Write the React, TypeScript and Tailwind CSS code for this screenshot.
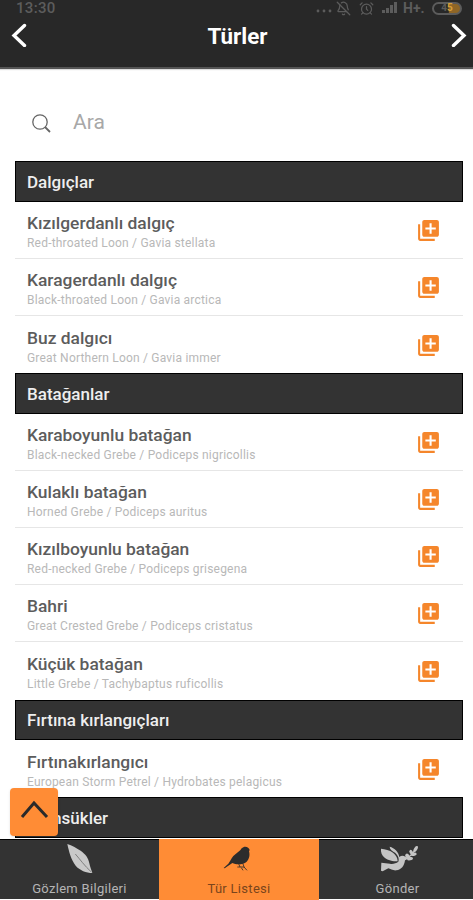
import { BellOff, AlarmClock } from 'lucide-react';
import { MdLibraryAdd } from 'react-icons/md';

type Species = { name: string; latin: string };
type Group = { title: string; species: Species[] };

const groups: Group[] = [
  {
    title: 'Dalgıçlar',
    species: [
      { name: 'Kızılgerdanlı dalgıç', latin: 'Red-throated Loon / Gavia stellata' },
      { name: 'Karagerdanlı dalgıç', latin: 'Black-throated Loon / Gavia arctica' },
      { name: 'Buz dalgıcı', latin: 'Great Northern Loon / Gavia immer' },
    ],
  },
  {
    title: 'Batağanlar',
    species: [
      { name: 'Karaboyunlu batağan', latin: 'Black-necked Grebe / Podiceps nigricollis' },
      { name: 'Kulaklı batağan', latin: 'Horned Grebe / Podiceps auritus' },
      { name: 'Kızılboyunlu batağan', latin: 'Red-necked Grebe / Podiceps grisegena' },
      { name: 'Bahri', latin: 'Great Crested Grebe / Podiceps cristatus' },
      { name: 'Küçük batağan', latin: 'Little Grebe / Tachybaptus ruficollis' },
    ],
  },
  {
    title: 'Fırtına kırlangıçları',
    species: [{ name: 'Fırtınakırlangıcı', latin: 'European Storm Petrel / Hydrobates pelagicus' }],
  },
  { title: 'Sümsükler', species: [] },
];

function StatusBar() {
  return (
    <div className="flex h-4 items-center justify-between pr-[11px] pl-4 text-[#5c5c5c]">
      <span className="text-[15px] leading-4 font-medium tracking-[0.3px]">13:30</span>
      <div className="flex h-4 items-center">
        <svg className="mr-1 h-4 w-4" viewBox="0 0 16 16" fill="currentColor">
          <circle cx="2" cy="11" r="1.4" />
          <circle cx="8" cy="11" r="1.4" />
          <circle cx="14" cy="11" r="1.4" />
        </svg>
        <BellOff className="mr-2 h-[15px] w-[15px]" />
        <AlarmClock className="mr-2 h-[15px] w-[15px]" />
        <svg className="mr-[5px] h-4 w-4" viewBox="0 0 16 16" fill="currentColor">
          <path d="M0 10h3v3H0zM4 8h3v5H4zM8 5h3v8H8zM12 2h3v11h-3z" />
        </svg>
        <span className="mr-[5px] w-[24px] text-[14px] leading-4 font-bold">H+.</span>
        <div className="flex h-[13px] w-[30px] items-center justify-center rounded-full border-2 border-[#5c5c5c] bg-linear-to-r from-transparent from-55% to-[#8f6626] to-60% text-[10px] leading-none font-bold">
          4<span className="text-[#d9a03c]">5</span>
        </div>
      </div>
    </div>
  );
}

function Header() {
  return (
    <header className="h-[69px] border-b-2 border-[#555] bg-[#282828] shadow-[0_1px_1px_#ddd]">
      <StatusBar />
      <div className="flex h-10 items-center justify-between pr-[6px] pl-[11px] text-white">
        <svg className="-mt-[3px] h-6 w-4" viewBox="0 0 16 24" fill="none" stroke="currentColor" strokeWidth="3.4" strokeLinecap="round">
          <path d="M13.5 2.5 3 12.5l10.5 10" />
        </svg>
        <h1 className="mr-[3px] text-[22.4px] leading-none font-bold">Türler</h1>
        <svg className="-mt-[3px] h-6 w-4" viewBox="0 0 16 24" fill="none" stroke="currentColor" strokeWidth="3.4" strokeLinecap="round">
          <path d="M2.5 2.5 13 12.5l-10.5 10" />
        </svg>
      </div>
    </header>
  );
}

function SearchBox() {
  return (
    <div className="flex h-[92.3px] items-center pt-[15px] pl-8">
      <svg className="mt-[3px] h-5 w-5" viewBox="0 0 20 20" fill="none" stroke="#666" strokeWidth="1.3">
        <circle cx="8" cy="8" r="7.2" />
        <path d="m13 13 5 5" strokeWidth="1.8" />
      </svg>
      <span className="ml-[21px] text-[21px] text-[#a8a8a8]">Ara</span>
    </div>
  );
}

function SpeciesRow({ name, latin }: Species) {
  return (
    <li className="flex h-[57.2px] items-center justify-between border-b border-[#e6e6e6] pr-[22px] pl-3 last:border-b-0">
      <div className="pt-1">
        <p className="text-[17.4px] leading-[22px] font-medium text-[#5c5c5c]">{name}</p>
        <p className="pt-px text-[12px] leading-[17px] tracking-[0.2px] text-[#b8b8b8]">{latin}</p>
      </div>
      <MdLibraryAdd className="mt-px h-[25px] w-[25px] text-[#f5862b]" />
    </li>
  );
}

function FeatherIcon() {
  return (
    <svg className="h-[34px] w-10" viewBox="0 0 120 102">
      <path d="M22 12c14 4 26 12 40 20 14 10 24 22 26 38 2 10 6 20 9 29-18 0-38-8-50-22-14-18-20-42-25-65z" fill="#c9c9c9" />
      <path d="M46 42c14 16 28 36 48 54" stroke="#808080" strokeWidth="3" fill="none" />
    </svg>
  );
}

function BirdIcon() {
  return (
    <svg className="h-[34px] w-[50px]" viewBox="0 0 150 102" fill="#2c2c2c">
      <path d="M107 30c-2-10-16-14-24-5-4 8-16 15-25 23-7 8-9 16-15 23L29 84l3 1 23-16c13 6 32 5 43-4 9-9 10-21 7-31z" />
      <path d="m73 69 5 12m8-12 5 14M70 81h20l9 10M82 83l5 8" stroke="#2c2c2c" strokeWidth="2.5" fill="none" />
    </svg>
  );
}

function DoveIcon() {
  return (
    <svg className="h-[34px] w-[54px]" viewBox="0 0 162 102" fill="#c4c4c4">
      <path d="M30 26c12 2 26 4 36 12 8 7 14 15 14 26-14 0-30-3-38-10-10-9-13-17-12-28z" />
      <path d="M56 20c15 4 27 16 29 31 5-4 12-5 18-1l8 5-9 6c-2 16-11 29-26 30-10 1-18-4-24-6l-17 9-5-2 1-24 26 3c8 2 18-1 25-6 4-9-2-23-14-29-5-4-12-8-12-16z" />
      <path d="M100 60c17-8 28-20 36-38" stroke="#c4c4c4" strokeWidth="4" fill="none" />
      <g>
        <ellipse cx="110" cy="49" rx="9" ry="6" transform="rotate(55 110 49)" />
        <ellipse cx="121" cy="37" rx="8" ry="5" transform="rotate(55 121 37)" />
        <ellipse cx="117" cy="56" rx="9" ry="5" transform="rotate(-10 117 56)" />
        <ellipse cx="128" cy="43" rx="9" ry="5" transform="rotate(-10 128 43)" />
        <ellipse cx="134" cy="27" rx="10" ry="5" transform="rotate(-60 134 27)" />
      </g>
    </svg>
  );
}

const tabs = [
  { label: 'Gözlem Bilgileri', icon: FeatherIcon, active: false },
  { label: 'Tür Listesi', icon: BirdIcon, active: true },
  { label: 'Gönder', icon: DoveIcon, active: false },
];

export default function App() {
  return (
    <div className="relative flex h-[900px] w-[473px] flex-col overflow-hidden bg-white font-[Roboto,sans-serif]">
      <Header />
      <SearchBox />
      <main className="min-h-0 flex-1 overflow-hidden pr-[10px] pl-[15px]">
        {groups.map((group) => (
          <section key={group.title}>
            <h2 className="flex h-[40.4px] items-center border border-black bg-[#333] pt-[2px] pl-[11px] text-[17px] font-medium text-[#eee]">
              {group.title}
            </h2>
            <ul>
              {group.species.map((s) => (
                <SpeciesRow key={s.name} {...s} />
              ))}
            </ul>
          </section>
        ))}
      </main>
      <button className="absolute top-[788px] left-[10px] flex h-12 w-12 items-center justify-center rounded bg-[#ff8c35] shadow">
        <svg className="h-8 w-8" viewBox="0 0 32 32" fill="none" stroke="#2a2a2a" strokeWidth="3">
          <path d="m4 21 12-14 13 14" />
        </svg>
      </button>
      <nav className="mb-px grid h-[60px] shrink-0 grid-cols-[159px_160px_154px] bg-[#333]">
        {tabs.map(({ label, icon: Icon, active }) => (
          <div
            key={label}
            className={
              active
                ? 'flex flex-col items-center border-b border-black bg-[#ff8c35] pt-px text-[#7a451c]'
                : 'flex flex-col items-center border-y border-black text-[#b5b5b5] last:pl-[3px]'
            }
          >
            <Icon />
            <span className="text-[13px] leading-[29px] tracking-[0.3px]">{label}</span>
          </div>
        ))}
      </nav>
    </div>
  );
}
